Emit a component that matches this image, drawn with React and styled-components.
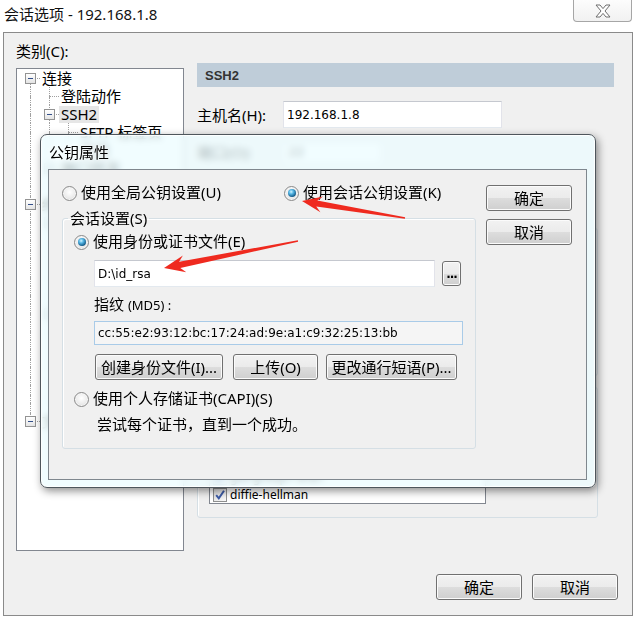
import React from 'react';
import styled, { createGlobalStyle } from 'styled-components';

const UI = `"Noto Sans", "Noto Sans CJK SC", sans-serif`;
const LATIN = `"DejaVu Sans", "Noto Sans CJK SC", sans-serif`;

const GlobalStyle = createGlobalStyle`
  html, body { margin: 0; padding: 0; background: #fff; }
  body { font-family: ${UI}; font-size: 15px; color: #000; }
  *, *::before, *::after { box-sizing: border-box; }
`;

/* ---------- background window ---------- */
const Screen = styled.div`
  position: relative;
  width: 638px;
  height: 623px;
  overflow: hidden;
  background: #fff;
  font-family: ${UI};
`;
const Window = styled.div`
  width: 630px;
  margin-left: 3px;
  display: flex;
  flex-direction: column;
`;
const TitleBar = styled.div`
  height: 32px;
  display: flex;
  justify-content: space-between;
  align-items: flex-start;
`;
const TitleText = styled.div`
  padding: 4px 0 0 1px;
  line-height: 20px;
  font-size: 15px;
  color: #111;
`;
const CloseButton = styled.div`
  width: 59px;
  height: 23px;
  margin: -1px 1px 0 0;
  border: 1px solid #a6a6a6;
  border-top: none;
  border-radius: 0 0 4px 4px;
  background: linear-gradient(#fdfdfd, #f1f1f1);
  display: flex;
  align-items: center;
  justify-content: center;
  padding-top: 1px;
`;
const Body = styled.div`
  height: 584px;
  border: 1px solid #8a8a8a;
  background: #f0f0f0;
  display: flex;
  flex-direction: column;
  padding: 10px 14px 15px 12px;
`;
const Main = styled.div`
  display: flex;
  gap: 13px;
`;
const LeftCol = styled.div`
  display: flex;
  flex-direction: column;
`;
const CaptionLabel = styled.div`
  line-height: 16px;
  font-size: 15px;
  margin-bottom: 9px;
`;
const Tree = styled.div`
  width: 168px;
  height: 483px;
  border: 1px solid #828790;
  background: #fff;
  padding-left: 4px;
  overflow: hidden;
`;
const TreeRowEl = styled.div`
  display: flex;
  align-items: center;
  height: 18.1px;
  white-space: nowrap;
`;
const TreeCell = styled.div`
  flex: none;
  width: 19px;
  align-self: stretch;
  display: grid;
  grid-template-columns: 9px 1px 9px;
  grid-template-rows: 1fr 1px 1fr;
`;
const VSeg = styled.div`
  grid-column: 2;
  grid-row: ${(p) => (p.$part === 'top' ? 1 : p.$part === 'mid' ? 2 : 3)};
  border-left: 1px dotted #a0a0a0;
`;
const HSeg = styled.div`
  grid-column: 3;
  grid-row: 2;
  border-top: 1px dotted #a0a0a0;
`;
const ExpanderBox = styled.div`
  grid-column: 1 / 4;
  grid-row: 1 / 4;
  justify-self: center;
  align-self: center;
  width: 11px;
  height: 11px;
  border: 1px solid #939393;
  background: linear-gradient(#ffffff, #e4e4e4);
  display: flex;
  align-items: center;
  justify-content: center;
  &::after {
    content: '';
    width: 5px;
    height: 1px;
    background: #34508a;
  }
`;
const TreeLabel = styled.span`
  line-height: 17px;
  padding: 0 2px;
  font-size: 15px;
  background: ${(p) => (p.$selected ? '#e6e6e6' : 'transparent')};
`;

const RightCol = styled.div`
  width: 417px;
  padding-top: 20px;
  display: flex;
  flex-direction: column;
`;
const PageHeader = styled.div`
  height: 24px;
  background: #bfcdd9;
  padding-left: 8px;
  display: flex;
  align-items: center;
  font: bold 13px "Liberation Sans", sans-serif;
  color: #333;
`;
const FormRow = styled.div`
  display: flex;
  align-items: center;
  margin-top: ${(p) => p.$mt}px;
`;
const FormLabel = styled.span`
  width: ${(p) => p.$w}px;
  font-size: 15px;
  line-height: 18px;
`;
const TextBox = styled.div`
  width: ${(p) => p.$w}px;
  height: ${(p) => p.$h}px;
  background: #fff;
  border: 1px solid #e2e3ea;
  border-top-color: #c5c8cf;
  border-bottom-color: #e3e9ef;
  padding-left: 3px;
  display: flex;
  align-items: center;
  font: 12px ${LATIN};
  color: #000;
`;
const GroupBox = styled.fieldset`
  margin: ${(p) => p.$mt}px 0 0 0;
  width: ${(p) => p.$w}px;
  height: ${(p) => p.$h}px;
  border: 1px solid #d5dfe5;
  border-radius: 3px;
  box-shadow: inset 1px 1px 0 #fff;
  padding: ${(p) => p.$pad};
  min-width: 0;
`;
const GroupLegend = styled.legend`
  padding: 0 2px;
  line-height: 18px;
  font-size: 15px;
`;
const ListBox = styled.div`
  margin-top: 10px;
  width: 277px;
  border: 1px solid #828790;
  background: #fff;
`;
const ListItem = styled.div`
  height: 17px;
  display: flex;
  align-items: center;
  padding-left: 3px;
  gap: 3px;
  font: 12px "Noto Sans", sans-serif;
`;
const CheckBox = styled.span`
  width: 14px;
  height: 14px;
  border: 1px solid #8e8f8f;
  background: linear-gradient(135deg, #dcdcdc, #fafafa);
  display: flex;
  align-items: center;
  justify-content: center;
`;
const Footer = styled.div`
  margin-top: auto;
  display: flex;
  justify-content: flex-end;
  gap: 10px;
`;
const Button = styled.button`
  width: ${(p) => p.$w || 86}px;
  height: 26px;
  flex: none;
  margin: 0 0 0 ${(p) => p.$ml || 0}px;
  border: 1px solid #707070;
  border-radius: 3px;
  background: linear-gradient(#f2f2f2 0%, #ebebeb 50%, #dddddd 50%, #cfcfcf 100%);
  box-shadow: inset 0 0 0 1px #fbfbfb;
  font: 15px ${UI};
  color: #000;
  padding: 0 0 2px 0;
  display: flex;
  align-items: center;
  justify-content: center;
  white-space: nowrap;
`;

/* ---------- modal ---------- */
const Modal = styled.div`
  position: absolute;
  left: 40px;
  top: 134px;
  width: 556px;
  height: 354px;
  border: 1px solid #4e565c;
  border-radius: 7px;
  background: rgba(236, 252, 255, 0.74);
  backdrop-filter: blur(3px);
  box-shadow: inset 0 0 0 1px rgba(255, 255, 255, 0.85), 2px 3px 8px rgba(0, 0, 0, 0.45);
  display: flex;
  flex-direction: column;
  padding: 0 8px 7px 7px;
`;
const ModalTitle = styled.div`
  height: 34px;
  padding: 7px 0 0 1px;
  line-height: 20px;
  font-size: 15px;
  color: #000;
  text-shadow: 0 0 6px #fff, 0 0 3px #fff;
`;
const Client = styled.div`
  height: 311px;
  border: 1px solid #7f878e;
  background: #f0f0f0;
  display: flex;
  gap: 10px;
  padding: 14px 14px 0 13px;
`;
const ModalMain = styled.div`
  width: 414px;
  display: flex;
  flex-direction: column;
`;
const OptionRow = styled.div`
  display: grid;
  grid-template-columns: 222px auto;
  height: 18px;
`;
const Option = styled.label`
  display: flex;
  align-items: center;
  gap: 4px;
  height: 18px;
  margin-top: ${(p) => p.$mt || 0}px;
  line-height: 18px;
  font-size: 15px;
  white-space: nowrap;
`;
const RadioDot = styled.span`
  flex: none;
  width: 15px;
  height: 15px;
  border-radius: 50%;
  border: 1px solid #8a8a8a;
  background: radial-gradient(circle at 50% 40%, #ffffff 0%, #ececec 55%, #d0d0d0 100%);
  box-shadow: inset 0 0 0 1px #f6f6f6;
  display: flex;
  align-items: center;
  justify-content: center;
  &::after {
    content: '';
    display: ${(p) => (p.$checked ? 'block' : 'none')};
    width: 8px;
    height: 8px;
    border-radius: 50%;
    background: radial-gradient(circle at 40% 35%, #d2f4ff 0%, #58b8e6 30%, #17618f 70%, #0b3453 100%);
  }
`;
const OptionText = styled.span`
  position: relative;
  top: -1px;
`;
const SessionGroup = styled.fieldset`
  margin: 7px 0 0 0;
  width: 414px;
  border: 1px solid #d5dfe5;
  border-radius: 3px;
  box-shadow: inset 1px 1px 0 #fff;
  padding: 6px 14px 14px 5px;
  min-width: 0;
`;
const GroupInner = styled.div`
  padding-left: 6px;
  display: flex;
  flex-direction: column;
`;
const FileRow = styled.div`
  display: flex;
  align-items: center;
  gap: 7px;
  margin-top: 9px;
  padding-left: 20px;
`;
const BrowseButton = styled(Button)`
  width: 19px;
  height: 25px;
  font: bold 12px "DejaVu Sans", sans-serif;
  align-items: flex-end;
  padding-bottom: 4px;
  letter-spacing: -1px;
`;
const SubLabel = styled.div`
  margin-top: 8px;
  padding-left: 20px;
  line-height: 18px;
  font-size: 15px;
`;
const SmallLatin = styled.span`
  font-size: 13px;
`;
const FingerprintBox = styled.div`
  margin: 7px 0 0 20px;
  width: 369px;
  height: 24px;
  border: 1px solid #a9cbe8;
  background: #f5f5f5;
  padding-left: 3px;
  display: flex;
  align-items: center;
  font: 12px ${LATIN};
  color: #000;
`;
const ActionRow = styled.div`
  display: flex;
  margin-top: 9px;
  padding-left: 21px;
`;
const HintText = styled.div`
  margin-top: 8px;
  padding-left: 23px;
  line-height: 16px;
  padding-bottom: 2px;
  font-size: 15px;
`;
const ModalButtons = styled.div`
  width: 86px;
  margin-top: 1px;
  display: flex;
  flex-direction: column;
  gap: 8px;
`;
const ArrowLayer = styled.svg`
  position: absolute;
  left: 0;
  top: 0;
  pointer-events: none;
`;

/* ---------- data ---------- */
const TREE = [
  {
    t: '连接',
    c: [
      { t: '登陆动作' },
      { t: 'SSH2', sel: true, c: [{ t: 'SFTP 标签页' }, { t: '高级' }] },
      { t: '端口转发', c: [{ t: '远程/X11' }] },
    ],
  },
  {
    t: '终端',
    c: [
      { t: '仿真', c: [{ t: '模式' }, { t: 'Emacs' }, { t: '映射键' }, { t: '高级' }] },
      { t: '外观', c: [{ t: '窗口' }, { t: '高级' }] },
      { t: '日志文件' },
      { t: '打印' },
      { t: 'X/Y/Zmodem' },
    ],
  },
  { t: '文件传输', c: [{ t: 'FTP/SFTP' }, { t: '高级' }] },
];

function flatten(nodes, guides = [], level = 0, out = []) {
  nodes.forEach((n, i) => {
    const isLast = i === nodes.length - 1;
    const isFirstRoot = level === 0 && i === 0;
    out.push({ text: n.t, sel: n.sel, guides, hasKids: !!n.c, isLast, isFirstRoot });
    if (n.c) flatten(n.c, [...guides, !isLast], level + 1, out);
  });
  return out;
}
const ROWS = flatten(TREE);

function arrowPoints([tx, ty], [sx, sy], hl, hw, nl, nw, tw) {
  const dx = sx - tx;
  const dy = sy - ty;
  const L = Math.hypot(dx, dy);
  const ux = dx / L;
  const uy = dy / L;
  const nx = -uy;
  const ny = ux;
  const p = (a, b) => `${(tx + ux * a + nx * b).toFixed(1)},${(ty + uy * a + ny * b).toFixed(1)}`;
  return [p(0, 0), p(hl, hw), p(nl, nw), p(L, tw), p(L, -tw), p(nl, -nw), p(hl, -hw)].join(' ');
}

/* ---------- parts ---------- */
function TreeRow({ row }) {
  return (
    <TreeRowEl>
      {row.guides.map((g, i) => (
        <TreeCell key={i}>
          {g && <VSeg $part="top" />}
          {g && <VSeg $part="mid" />}
          {g && <VSeg $part="bot" />}
        </TreeCell>
      ))}
      <TreeCell>
        {!row.isFirstRoot && <VSeg $part="top" />}
        <VSeg $part="mid" />
        {!row.isLast && <VSeg $part="bot" />}
        <HSeg />
        {row.hasKids && <ExpanderBox />}
      </TreeCell>
      <TreeLabel $selected={row.sel}>{row.text}</TreeLabel>
    </TreeRowEl>
  );
}

function Radio({ checked, children, mt }) {
  return (
    <Option $mt={mt}>
      <RadioDot $checked={checked} />
      <OptionText>{children}</OptionText>
    </Option>
  );
}

function CloseGlyph() {
  return (
    <svg width="16" height="14" viewBox="0 0 16 14">
      <polygon
        points="1,1 5,1 8,4.6 11,1 15,1 10,7 15,13 11,13 8,9.4 5,13 1,13 6,7"
        fill="#fff"
        stroke="#6e6e6e"
        strokeWidth="1"
        strokeLinejoin="round"
      />
    </svg>
  );
}

function CheckMark() {
  return (
    <svg width="12" height="12" viewBox="0 0 12 12">
      <path d="M2.2 6.2 L4.8 9.4 L10 1.8" fill="none" stroke="#3c5ba6" strokeWidth="2" />
    </svg>
  );
}

export default function App() {
  return (
    <Screen>
      <GlobalStyle />
      <Window>
        <TitleBar>
          <TitleText>会话选项 - 192.168.1.8</TitleText>
          <CloseButton>
            <CloseGlyph />
          </CloseButton>
        </TitleBar>
        <Body>
          <Main>
            <LeftCol>
              <CaptionLabel>类别(C):</CaptionLabel>
              <Tree>
                {ROWS.map((r, i) => (
                  <TreeRow key={i} row={r} />
                ))}
              </Tree>
            </LeftCol>
            <RightCol>
              <PageHeader>SSH2</PageHeader>
              <FormRow $mt={14}>
                <FormLabel $w={86}>主机名(H):</FormLabel>
                <TextBox $w={219} $h={27}>192.168.1.8</TextBox>
              </FormRow>
              <FormRow $mt={13}>
                <FormLabel $w={88}>端口(O):</FormLabel>
                <TextBox $w={96} $h={22}>22</TextBox>
              </FormRow>
              <GroupBox $mt={56} $w={401} $h={157} $pad="4px 11px 10px 11px">
                <GroupLegend>鉴权</GroupLegend>
              </GroupBox>
              <GroupBox $mt={2} $w={401} $h={140} $pad="8px 11px 12px 11px">
                <GroupLegend>密钥交换</GroupLegend>
                <FormLabel $w={200}>算法:</FormLabel>
                <ListBox>
                  <ListItem>
                    <CheckBox>
                      <CheckMark />
                    </CheckBox>
                    diffie-hellman-group-exchange
                  </ListItem>
                  <ListItem>
                    <CheckBox>
                      <CheckMark />
                    </CheckBox>
                    diffie-hellman-group14
                  </ListItem>
                  <ListItem>
                    <CheckBox>
                      <CheckMark />
                    </CheckBox>
                    gss-group1-sha1
                  </ListItem>
                  <ListItem>
                    <CheckBox>
                      <CheckMark />
                    </CheckBox>
                    diffie-hellman
                  </ListItem>
                </ListBox>
              </GroupBox>
            </RightCol>
          </Main>
          <Footer>
            <Button>确定</Button>
            <Button>取消</Button>
          </Footer>
        </Body>
      </Window>

      <Modal>
        <ModalTitle>公钥属性</ModalTitle>
        <Client>
          <ModalMain>
            <OptionRow>
              <Radio>使用全局公钥设置(U)</Radio>
              <Radio checked>使用会话公钥设置(K)</Radio>
            </OptionRow>
            <SessionGroup>
              <GroupLegend>会话设置(S)</GroupLegend>
              <GroupInner>
                <Radio checked>使用身份或证书文件(E)</Radio>
                <FileRow>
                  <TextBox $w={343} $h={27}>D:\id_rsa</TextBox>
                  <BrowseButton>...</BrowseButton>
                </FileRow>
                <SubLabel>
                  指纹 <SmallLatin>(MD5) :</SmallLatin>
                </SubLabel>
                <FingerprintBox>cc:55:e2:93:12:bc:17:24:ad:9e:a1:c9:32:25:13:bb</FingerprintBox>
                <ActionRow>
                  <Button $w={128}>创建身份文件(I)...</Button>
                  <Button $w={85} $ml={10}>上传(O)</Button>
                  <Button $w={131} $ml={8}>更改通行短语(P)...</Button>
                </ActionRow>
                <Radio mt={10}>使用个人存储证书(CAPI)(S)</Radio>
                <HintText>尝试每个证书，直到一个成功。</HintText>
              </GroupInner>
            </SessionGroup>
          </ModalMain>
          <ModalButtons>
            <Button>确定</Button>
            <Button>取消</Button>
          </ModalButtons>
        </Client>
      </Modal>

      <ArrowLayer width="638" height="623" viewBox="0 0 638 623">
        <polygon fill="#ef2a1f" points={arrowPoints([302, 201], [405, 218], 20, 8, 15, 3, 0.7)} />
        <polygon fill="#ef2a1f" points={arrowPoints([164, 268], [298, 241], 21, 8.5, 16, 3.2, 0.7)} />
      </ArrowLayer>
    </Screen>
  );
}
